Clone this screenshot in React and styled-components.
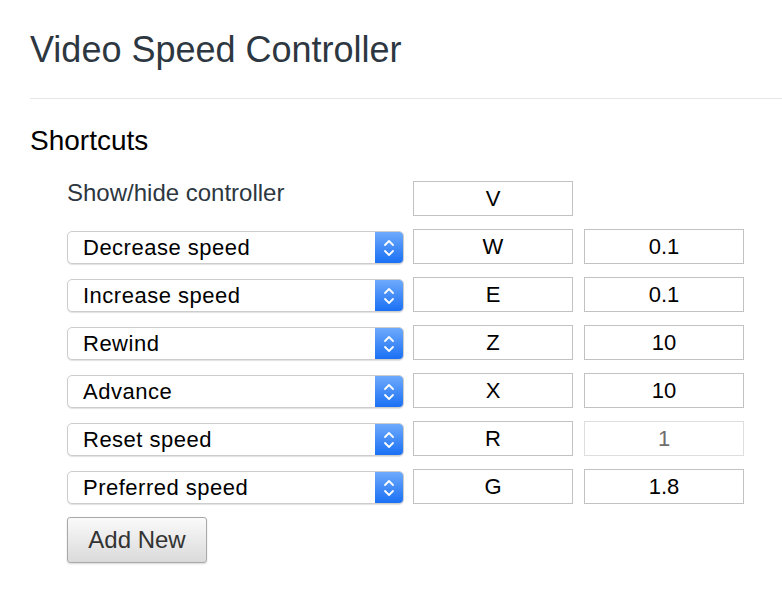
import styled, { createGlobalStyle } from "styled-components";

const GlobalStyle = createGlobalStyle`
  body {
    margin: 0;
    background: #fff;
    font-family: "Liberation Sans", Helvetica, Arial, sans-serif;
  }
`;

const Page = styled.div`
  padding: 0 0 40px 30px;
`;

const Header = styled.header`
  padding: 32px 0 30px;
  border-bottom: 1px solid #e6e6e6;
`;

const Title = styled.h1`
  margin: 0;
  font-size: 36px;
  line-height: 1;
  font-weight: 400;
  color: #2d3741;
`;

const SectionTitle = styled.h2`
  margin: 28px 0 26px;
  font-size: 28px;
  line-height: 1;
  font-weight: 400;
  color: #000;
`;

const Shortcuts = styled.div`
  display: flex;
  flex-direction: column;
  gap: 13px;
  padding-left: 37px;
`;

const Row = styled.div`
  display: flex;
  align-items: center;
`;

const Label = styled.div`
  width: 337px;
  margin-right: 9px;
  align-self: flex-start;
  font-size: 24px;
  line-height: 1;
  color: #2d3741;
`;

const SelectBox = styled.div`
  display: flex;
  width: 337px;
  height: 33px;
  margin: 2px 9px 0 0;
  box-sizing: border-box;
  border: 1px solid #cdcdcd;
  border-radius: 5px;
  overflow: hidden;
  box-shadow: 0 1px 1px rgba(0, 0, 0, 0.12);
  background: #fff;
`;

const Select = styled.select`
  flex: 1;
  appearance: none;
  border: none;
  outline: none;
  background: transparent;
  padding: 0 0 0 15px;
  font-family: inherit;
  font-size: 22px;
  letter-spacing: 0.5px;
  color: #000;
`;

const Stepper = styled.div`
  width: 28px;
  display: flex;
  align-items: center;
  justify-content: center;
  background: linear-gradient(#6eaafc, #1a70f4);
`;

const Input = styled.input`
  width: 160px;
  height: 35px;
  box-sizing: border-box;
  border: 1px solid ${(p) => (p.disabled ? "#dedede" : "#c2c2c2")};
  border-radius: 0;
  background: #fff;
  text-align: center;
  font-family: inherit;
  font-size: 22px;
  color: ${(p) => (p.disabled ? "#6d6d6d" : "#000")};
  padding: 0;

  & + & {
    margin-left: 11px;
  }
`;

const AddButton = styled.button`
  width: 140px;
  height: 46px;
  border: 1px solid #a9a9a9;
  border-radius: 3px;
  background: linear-gradient(#fafafa, #dadada);
  box-shadow: 0 1px 2px rgba(0, 0, 0, 0.15);
  font-family: inherit;
  font-size: 24px;
  color: #333;
  cursor: pointer;
`;

const ACTIONS = [
  "Decrease speed",
  "Increase speed",
  "Rewind",
  "Advance",
  "Reset speed",
  "Preferred speed",
];

const shortcuts = [
  { action: "Decrease speed", key: "W", value: "0.1" },
  { action: "Increase speed", key: "E", value: "0.1" },
  { action: "Rewind", key: "Z", value: "10" },
  { action: "Advance", key: "X", value: "10" },
  { action: "Reset speed", key: "R", value: "1", locked: true },
  { action: "Preferred speed", key: "G", value: "1.8" },
];

const Chevrons = () => (
  <svg width="12" height="20" viewBox="0 0 12 20" fill="none">
    <path
      d="M2 7 L6 3 L10 7 M2 13 L6 17 L10 13"
      stroke="#fff"
      strokeWidth="1.8"
      strokeLinecap="round"
      strokeLinejoin="round"
    />
  </svg>
);

const App = () => {
  return (
    <Page>
      <GlobalStyle />
      <Header>
        <Title>Video Speed Controller</Title>
      </Header>
      <SectionTitle>Shortcuts</SectionTitle>
      <Shortcuts>
        <Row>
          <Label>Show/hide controller</Label>
          <Input type="text" defaultValue="V" />
        </Row>
        {shortcuts.map((s) => (
          <Row key={s.action}>
            <SelectBox>
              <Select defaultValue={s.action}>
                {ACTIONS.map((a) => (
                  <option key={a}>{a}</option>
                ))}
              </Select>
              <Stepper>
                <Chevrons />
              </Stepper>
            </SelectBox>
            <Input type="text" defaultValue={s.key} />
            <Input type="text" defaultValue={s.value} disabled={s.locked} />
          </Row>
        ))}
        <div>
          <AddButton>Add New</AddButton>
        </div>
      </Shortcuts>
    </Page>
  );
};

export default App;
